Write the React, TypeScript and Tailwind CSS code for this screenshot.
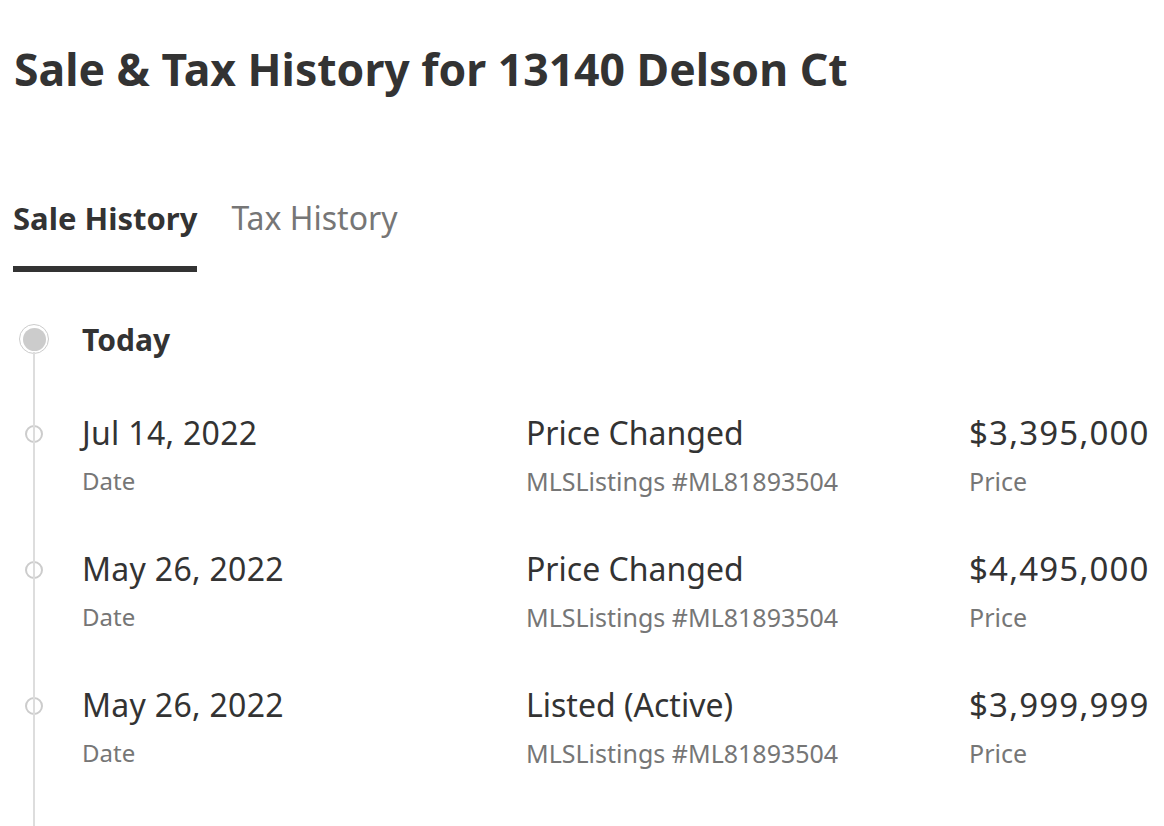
import React from "react";

const rows = [
  { date: "Jul 14, 2022", event: "Price Changed", price: "$3,395,000" },
  { date: "May 26, 2022", event: "Price Changed", price: "$4,495,000" },
  { date: "May 26, 2022", event: "Listed (Active)", price: "$3,999,999" },
];

const sans = { fontFamily: '"Noto Sans", "Open Sans", sans-serif' };

export default function App() {
  return (
    <div className="w-[1164px] h-[826px] overflow-hidden bg-white text-[#333]" style={sans}>
      <div className="pl-[14px] pt-[42px]">
        <h1 className="text-[44.5px] leading-[54px] font-bold">
          Sale &amp; Tax History for 13140 Delson Ct
        </h1>
      </div>
      <div className="flex gap-[34px] pl-[13px] mt-[102px]">
        <div className="flex flex-col">
          <span className="text-[31px] leading-[40px] font-bold text-[#333]">Sale History</span>
          <div className="h-[6px] bg-[#333] mt-[28px]" />
        </div>
        <span className="text-[32px] leading-[40px] text-[#767676]">Tax History</span>
      </div>
      <div className="relative mt-[46px] pl-[13px]">
        <div className="absolute left-[33px] top-[34px] w-[2px] h-[600px] bg-[#ddd]" />
        <div className="flex items-center h-[42px]">
          <div className="w-[42px] flex justify-center">
            <div className="w-[30px] h-[30px] rounded-full border border-[#ccc] bg-white flex items-center justify-center">
              <div className="w-[23px] h-[23px] rounded-full bg-[#ccc]" />
            </div>
          </div>
          <span className="ml-[27px] text-[30px] font-bold">Today</span>
        </div>
        {rows.map((r, i) => (
          <div key={i} className="flex items-start mt-[53px] h-[83px]">
            <div className="w-[42px] flex justify-center pt-[12px]">
              <div className="w-[18px] h-[18px] rounded-full border-2 border-[#ccc] bg-white" />
            </div>
            <div className="ml-[27px] w-[444px] flex flex-col">
              <span className="text-[32px] leading-[40px] tracking-[0.3px]">{r.date}</span>
              <span className="text-[24px] leading-[30px] mt-[13px] text-[#767676]">Date</span>
            </div>
            <div className="w-[443px] flex flex-col whitespace-nowrap">
              <span className="text-[32px] leading-[40px]">{r.event}</span>
              <span className="text-[25px] leading-[30px] mt-[13px] text-[#767676]">MLSListings #ML81893504</span>
            </div>
            <div className="flex flex-col whitespace-nowrap">
              <span className="text-[33px] leading-[40px] tracking-[1.2px]">{r.price}</span>
              <span className="text-[25px] leading-[30px] mt-[13px] text-[#767676]">Price</span>
            </div>
          </div>
        ))}
      </div>
    </div>
  );
}
